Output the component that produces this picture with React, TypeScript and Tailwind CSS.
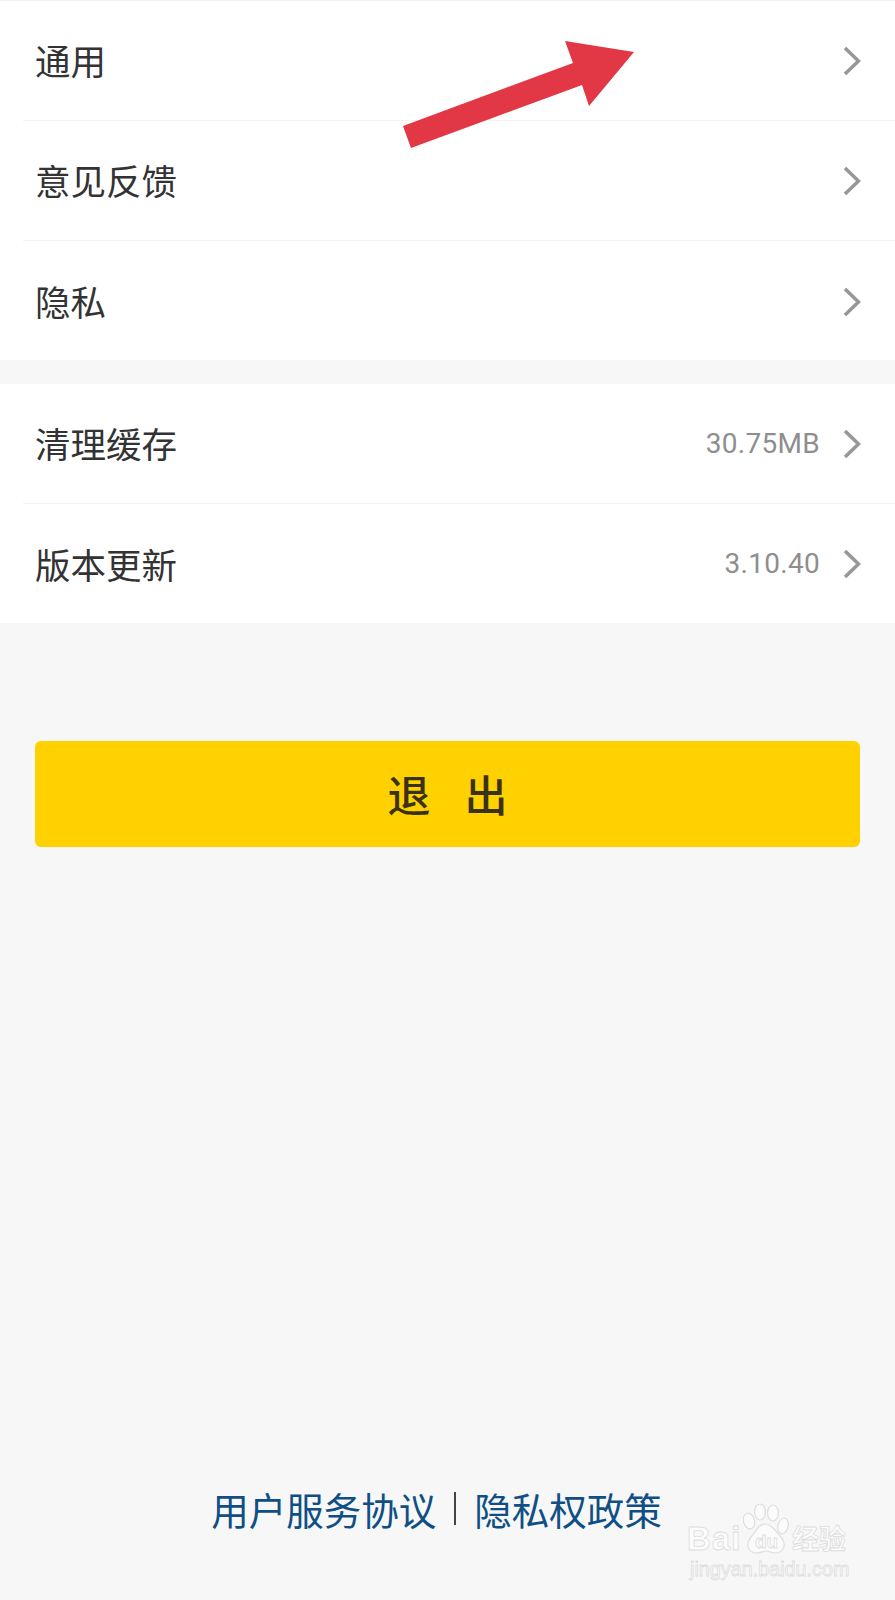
const CJK = "font-['Noto_Sans_CJK_SC','Noto_Sans',sans-serif]";

function Chevron() {
  return (
    <svg width="18" height="30" viewBox="0 0 18 30" className="shrink-0" fill="none">
      <path d="M2 2 L15.5 15 L2 28" stroke="#979797" strokeWidth="3.6" />
    </svg>
  );
}

function Row({ label, value, divider, className }: { label: string; value?: string; divider?: boolean; className: string }) {
  return (
    <div className={`relative flex items-center pl-[35px] pr-[34px] ${className}`}>
      <span className="-translate-y-[1px] text-[35.5px] leading-none text-[#333333]">{label}</span>
      {value && <span className="ml-auto mr-[23px] font-['Roboto',sans-serif] text-[28px] leading-none tracking-[0.3px] text-[#8e8e8e]">{value}</span>}
      <span className={value ? "" : "ml-auto"}><Chevron /></span>
      {divider && <div className="absolute bottom-0 left-[23px] right-0 h-px bg-[#f3f3f3]" />}
    </div>
  );
}

function Watermark() {
  return (
    <div className="pointer-events-none absolute left-[687px] top-[1503px] h-[80px] w-[165px] text-[#fcfcfc] [-webkit-text-stroke:0.8px_#dddddd]">
      <span className="absolute left-0 top-[19px] font-['Liberation_Sans',sans-serif] text-[33px] font-bold leading-none tracking-[1px]">Bai</span>
      <svg className="absolute left-[56px] top-0" width="46" height="52" viewBox="0 0 46 52" fill="#fbfbfb" stroke="#dedede" strokeWidth="1.2">
        <ellipse cx="6" cy="18" rx="5.5" ry="8" transform="rotate(-15 6 18)" />
        <ellipse cx="17" cy="9" rx="5.5" ry="8" />
        <ellipse cx="30" cy="10" rx="5.5" ry="8" />
        <ellipse cx="40" cy="23" rx="5" ry="8" transform="rotate(15 40 23)" />
        <path d="M22 21 C15 21 13 29 8 34 C2 41 5 50 14 50 C18 50 20 48 23 48 C26 48 28 50 32 50 C41 50 44 41 38 34 C33 29 29 21 22 21 Z" />
      </svg>
      <span className="absolute left-[68px] top-[29px] font-['Liberation_Sans',sans-serif] text-[19px] font-bold leading-none">du</span>
      <span className="absolute left-[105px] top-[21px] text-[27px] font-bold leading-none">经验</span>
      <span className="absolute left-[3px] top-[57px] font-['Liberation_Sans',sans-serif] text-[19.8px] leading-none">jingyan.baidu.com</span>
    </div>
  );
}

export default function App() {
  return (
    <div className={`relative flex h-[1600px] w-[895px] flex-col overflow-hidden bg-[#f7f7f7] ${CJK}`}>
      <div className="border-t border-[#f1f1f1] bg-white">
        <Row className="h-[120px]" label="通用" divider />
        <Row className="h-[120px]" label="意见反馈" divider />
        <Row className="h-[119px] pt-[3px]" label="隐私" />
      </div>
      <div className="mt-[24px] bg-white">
        <Row className="h-[119.5px]" label="清理缓存" value="30.75MB" divider />
        <Row className="h-[119.5px] pt-[2px]" label="版本更新" value="3.10.40" />
      </div>
      <button className="mx-[35px] mt-[118px] flex h-[106px] items-center justify-center rounded-[6px] bg-[#ffd100] text-[43px] font-medium leading-none text-[#3a3212]">
        <span className="mr-[34px] -translate-y-[1px]">退</span><span className="-translate-y-[1px]">出</span>
      </button>
      <div className="mb-[73px] mt-auto flex items-center justify-center pr-[22px] text-[37.5px] leading-none text-[#0f4f85]">
        <span>用户服务协议</span>
        <span className="mx-[18px] h-[33px] w-[2px] bg-[#444444]" />
        <span>隐私权政策</span>
      </div>

      <svg className="absolute left-0 top-0" width="895" height="160" viewBox="0 0 895 160">
        <polygon points="403,126 573,63 565,41 634,52 589,106 582,85 411,148" fill="#e23744" />
      </svg>
      <Watermark />
    </div>
  );
}
